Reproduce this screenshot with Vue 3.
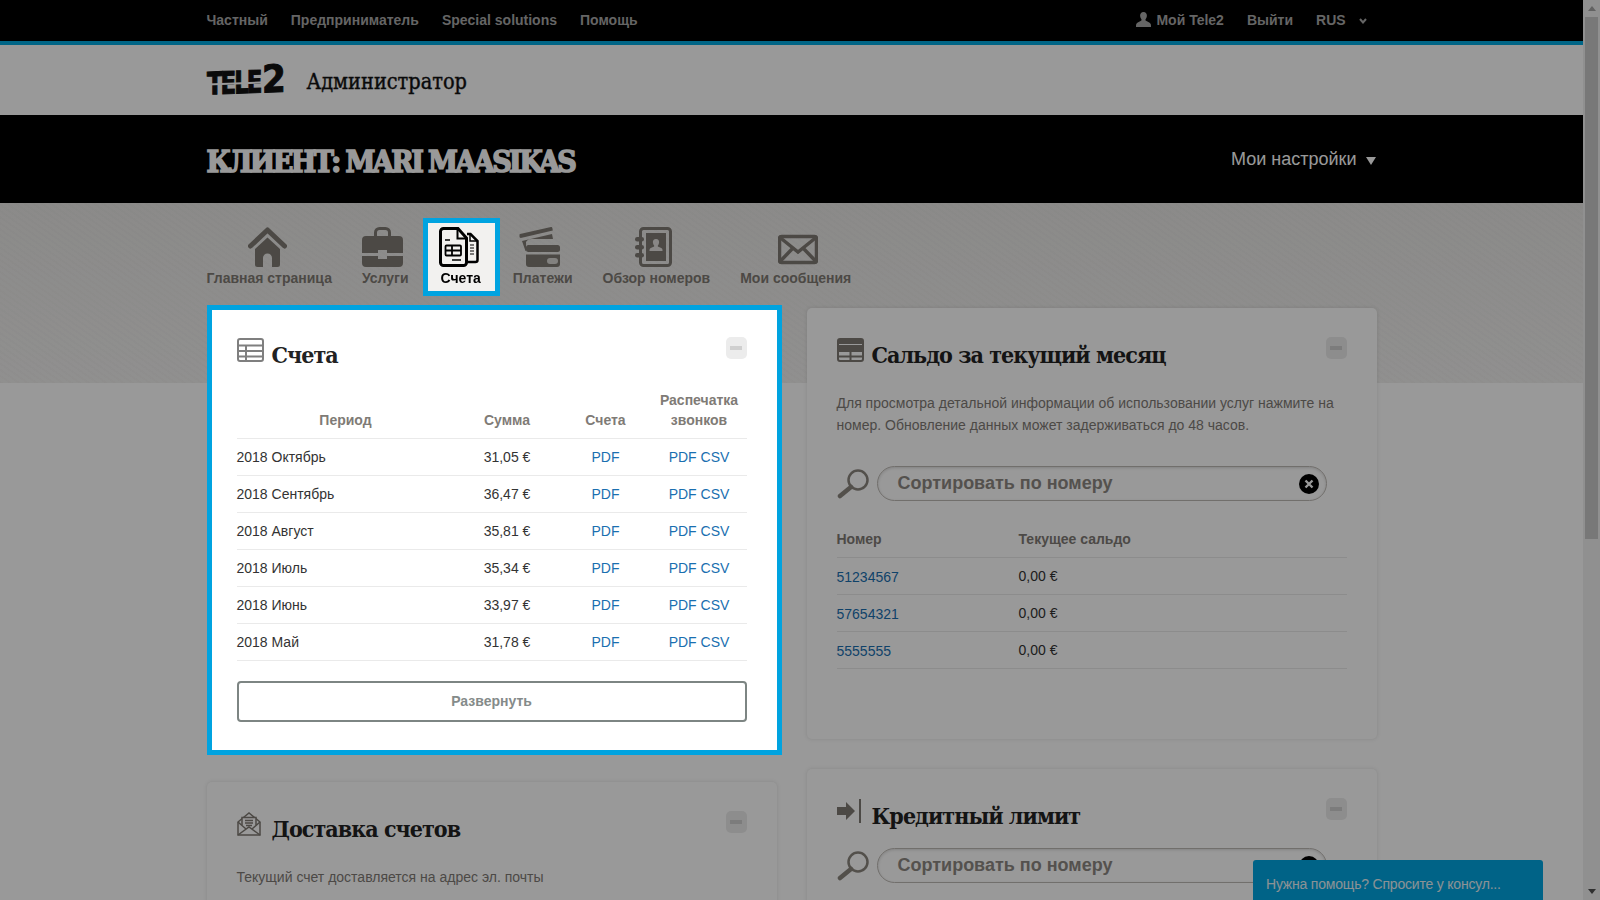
<script setup>
const nav = [
  { key: 'home', label: 'Главная страница' },
  { key: 'case', label: 'Услуги' },
  { key: 'bills', label: 'Счета', active: true },
  { key: 'cards', label: 'Платежи' },
  { key: 'book', label: 'Обзор номеров' },
  { key: 'mail', label: 'Мои сообщения' },
]

const bills = [
  { period: '2018 Октябрь', sum: '31,05 €' },
  { period: '2018 Сентябрь', sum: '36,47 €' },
  { period: '2018 Август', sum: '35,81 €' },
  { period: '2018 Июль', sum: '35,34 €' },
  { period: '2018 Июнь', sum: '33,97 €' },
  { period: '2018 Май', sum: '31,78 €' },
]

const numbers = ['51234567', '57654321', '5555555']
</script>

<template>
  <div class="app">
    <div class="page">
      <div class="topbar">
        <div class="wrap topbar-in">
          <div class="top-links">
            <a>Частный</a>
            <a>Предприниматель</a>
            <a>Special solutions</a>
            <a>Помощь</a>
          </div>
          <div class="top-links right">
            <a class="me">
              <svg width="15" height="15" viewBox="0 0 15 15"><path d="M7.5 0c2.3 0 3.6 1.700 3.400 4-.1 1.400-.6 2.500-1.300 3.300-.3.5-.2 1.200.4 1.500 1.800.8 4 1.700 4.800 3.500.2.700.2 1.700.2 2.700H0c0-1 0-2 .2-2.700.8-1.800 3-2.700 4.800-3.500.6-.3.7-1 .4-1.500C4.700 6.500 4.200 5.400 4.100 4 3.900 1.700 5.200 0 7.500 0z" fill="#a8a8a8"/></svg>
              Мой Tele2
            </a>
            <a>Выйти</a>
            <a class="lang">RUS
              <svg width="8" height="6" viewBox="0 0 8 6"><path d="M1 1l3 3.500L7 1" fill="none" stroke="#a8a8a8" stroke-width="2"/></svg>
            </a>
          </div>
        </div>
      </div>

      <div class="head">
        <div class="wrap head-in">
          <div class="logo"><span class="logo-tele">TELE</span><span class="logo-two">2</span></div>
          <div class="role">Администратор</div>
        </div>
      </div>

      <div class="banner">
        <div class="wrap banner-in">
          <h1>КЛИЕНТ: MARI MAASIKAS</h1>
          <div class="settings">Мои настройки <i class="tri"></i></div>
        </div>
      </div>

      <div class="content">
        <div class="wrap">
          <div class="nav">
            <div v-for="item in nav" :key="item.key" class="nav-item" :class="{ active: item.active }">
              <div class="nav-icon" :class="'i-' + item.key">
                <svg v-if="item.key === 'home'" width="39" height="40" viewBox="0 0 39 40" fill="#7f7a73">
                  <path d="M2.500 19L19.500 3l17 16" fill="none" stroke="#7f7a73" stroke-width="5" stroke-linecap="round" stroke-linejoin="round"/>
                  <path d="M19.500 10.500L32 22v15.500a2.500 2.500 0 0 1-2.500 2.500H24V31a4.500 4.500 0 0 0-9 0v9H9.500A2.500 2.500 0 0 1 7 37.500V22z"/>
                </svg>
                <svg v-else-if="item.key === 'case'" width="41" height="40" viewBox="0 0 41 40" fill="#7f7a73">
                  <rect x="13.500" y="1.500" width="14" height="11" rx="4" fill="none" stroke="#7f7a73" stroke-width="3"/>
                  <path d="M4 9h33a4 4 0 0 1 4 4v13H25v-3h-9v3H0V13a4 4 0 0 1 4-4z"/>
                  <path d="M0 29h16v3h9v-3h16v7a4 4 0 0 1-4 4H4a4 4 0 0 1-4-4z"/>
                </svg>
                <svg v-else-if="item.key === 'bills'" width="40" height="40" viewBox="0 0 40 40">
                  <path d="M28 7h3.500L38.500 14v19a2 2 0 0 1-2 2H27" fill="none" stroke="#000" stroke-width="2.500"/>
                  <path d="M31 7v7h7" fill="none" stroke="#000" stroke-width="1.500"/>
                  <path d="M31 18h4M31 21h4M31 24h4M31 27h4" stroke="#000" stroke-width="1.200"/>
                  <path d="M4.500 1.500H19L27.500 11v24.500a3 3 0 0 1-3 3h-20a3 3 0 0 1-3-3v-31a3 3 0 0 1 3-3z" fill="#f2f1ef" stroke="#000" stroke-width="3"/>
                  <path d="M18.500 2v9.500h9" fill="none" stroke="#000" stroke-width="2"/>
                  <path d="M6 13h5M13 33h9" stroke="#000" stroke-width="1.500"/>
                  <rect x="6.500" y="18.500" width="15.500" height="10" rx="1" fill="none" stroke="#000" stroke-width="1.800"/>
                  <path d="M6.500 23.500H22M13 18.500v10" stroke="#000" stroke-width="1.800"/>
                </svg>
                <svg v-else-if="item.key === 'cards'" width="42" height="40" viewBox="0 0 42 40" fill="#7f7a73">
                  <path d="M1 7L32 0c.8 0 1.300.5 1.400 1.200l.4 2.300L1.800 11C1 11 .5 10.500.5 9.800V8c0-.5.2-.9.500-1z"/>
                  <path d="M3 14l30-7 1 5H13c-3 0-5 1-6 3l.2 9h-.7z"/>
                  <rect x="7" y="18" width="34" height="7" rx="2.500"/>
                  <path d="M7 27.500h34V37a3 3 0 0 1-3 3H10a3 3 0 0 1-3-3z"/>
                  <rect x="28" y="31" width="11" height="6" rx="3" fill="#d9d7d4"/>
                </svg>
                <svg v-else-if="item.key === 'book'" width="37" height="40" viewBox="0 0 37 40" fill="#7f7a73">
                  <rect x="5.500" y="1.500" width="30" height="37" rx="3" fill="none" stroke="#7f7a73" stroke-width="3"/>
                  <rect x="11" y="6" width="20" height="28"/>
                  <rect x="0" y="10" width="9" height="4.500" rx="2.200"/>
                  <rect x="0" y="18" width="9" height="4.500" rx="2.200"/>
                  <rect x="0" y="26" width="9" height="4.500" rx="2.200"/>
                  <path d="M21 12c2.300 0 3.300 1.700 3.100 3.600-.1 1.200-.6 2.200-1.200 2.900-.3.500-.1 1 .4 1.200 1.700.7 3.400 1.100 4 2.300.2.500.2 1.500.2 2H14.500c0-.5 0-1.500.2-2 .6-1.200 2.300-1.600 4-2.300.5-.2.700-.7.400-1.200-.6-.7-1.100-1.700-1.200-2.900C17.700 13.700 18.700 12 21 12z" fill="#e4e2df"/>
                </svg>
                <svg v-else width="40" height="40" viewBox="0 0 40 40" fill="none" stroke="#7f7a73" stroke-width="3.500">
                  <rect x="1.500" y="9.500" width="37" height="26" rx="2"/>
                  <path d="M2 10.500L20 25l18-14.500M2 34.500L15 21M38 34.500L25 21"/>
                </svg>
              </div>
              <span>{{ item.label }}</span>
            </div>
          </div>

          <div class="columns">
            <div class="col">
              <section class="card spot">
                <div class="card-title">
                  <svg width="27" height="24" viewBox="0 0 27 24" fill="none" stroke="#7f7f7f" stroke-width="2">
                    <rect x="1" y="1" width="25" height="22" rx="2"/>
                    <path d="M1 7.500h25M1 13h25M1 18.500h25M9 7.500V23"/>
                  </svg>
                  <h2>Счета</h2>
                  <button class="minus"><i></i></button>
                </div>
                <table class="bills">
                  <thead>
                    <tr>
                      <th class="c-period">Период</th>
                      <th class="c-sum">Сумма</th>
                      <th class="c-bill">Счета</th>
                      <th class="c-calls">Распечатка<br>звонков</th>
                    </tr>
                  </thead>
                  <tbody>
                    <tr v-for="row in bills" :key="row.period">
                      <td class="left">{{ row.period }}</td>
                      <td>{{ row.sum }}</td>
                      <td><a>PDF</a></td>
                      <td><a>PDF</a> <a>CSV</a></td>
                    </tr>
                  </tbody>
                </table>
                <button class="expand">Развернуть</button>
              </section>

              <section class="card">
                <div class="card-title">
                  <svg width="24" height="24" viewBox="0 0 24 24" fill="none" stroke="#7f7a73" stroke-width="1.500">
                    <path d="M1 10L12 1l11 9v13H1z"/>
                    <path d="M1 10l8 7M23 10l-8 7M1 23l11-8 11 8"/>
                    <path d="M5 13V5.500h14V13" fill="#fff"/>
                    <path d="M8 8.500h8M8 11h8M9 13.500h6"/>
                  </svg>
                  <h2>Доставка счетов</h2>
                  <button class="minus"><i></i></button>
                </div>
                <p class="text">Текущий счет доставляется на адрес эл. почты</p>
              </section>
            </div>

            <div class="col">
              <section class="card balance">
                <div class="card-title">
                  <svg width="27" height="24" viewBox="0 0 27 24">
                    <rect x="1" y="1" width="25" height="22" rx="2" fill="none" stroke="#7f7a73" stroke-width="2"/>
                    <rect x="1" y="7" width="25" height="7" fill="#7f7a73"/>
                    <path d="M1 3.500h25" stroke="#7f7a73" stroke-width="5"/>
                    <path d="M1 18.500h25M13.500 14v9" stroke="#7f7a73" stroke-width="2"/>
                  </svg>
                  <h2>Сальдо за текущий месяц</h2>
                  <button class="minus"><i></i></button>
                </div>
                <p class="text">Для просмотра детальной информации об использовании услуг нажмите на номер. Обновление данных может задерживаться до 48 часов.</p>
                <div class="search">
                  <svg width="32" height="30" viewBox="0 0 32 30" fill="none" stroke="#8a857e">
                    <circle cx="21" cy="11" r="9.500" stroke-width="2.500"/>
                    <path d="M14 18L3 27" stroke-width="4.500" stroke-linecap="round"/>
                  </svg>
                  <div class="field">
                    <span>Сортировать по номеру</span>
                    <i class="clear">
                      <svg width="10" height="10" viewBox="0 0 10 10"><path d="M1.500 1.500l7 7M8.500 1.500l-7 7" stroke="#fff" stroke-width="2.400"/></svg>
                    </i>
                  </div>
                </div>
                <table class="nums">
                  <thead>
                    <tr>
                      <th class="c-num">Номер</th>
                      <th>Текущее сальдо</th>
                    </tr>
                  </thead>
                  <tbody>
                    <tr v-for="num in numbers" :key="num">
                      <td class="num"><a>{{ num }}</a></td>
                      <td>0,00 €</td>
                    </tr>
                  </tbody>
                </table>
              </section>

              <section class="card">
                <div class="card-title credit">
                  <svg width="25" height="24" viewBox="0 0 25 24" fill="#7f7a73">
                    <path d="M0 8h9V3l9 9-9 9v-5H0z"/>
                    <rect x="22" y="0" width="2" height="24"/>
                  </svg>
                  <h2>Кредитный лимит</h2>
                  <button class="minus"><i></i></button>
                </div>
                <div class="search">
                  <svg width="32" height="30" viewBox="0 0 32 30" fill="none" stroke="#8a857e">
                    <circle cx="21" cy="11" r="9.500" stroke-width="2.500"/>
                    <path d="M14 18L3 27" stroke-width="4.500" stroke-linecap="round"/>
                  </svg>
                  <div class="field">
                    <span>Сортировать по номеру</span>
                    <i class="clear"></i>
                  </div>
                </div>
              </section>
            </div>
          </div>
        </div>
      </div>

      <div class="chat">Нужна помощь? Спросите у консул...</div>
    </div>

    <div class="scrollbar">
      <i class="arrow up"></i>
      <div class="thumb-track"><div class="thumb"></div></div>
      <i class="arrow down"></i>
    </div>

    <div class="overlay"></div>
  </div>
</template>

<style>
html, body {
  overflow: hidden;
}
</style>

<style scoped>
.app {
  display: flex;
  width: 1600px;
  height: 900px;
  font-family: "Liberation Sans", Arial, sans-serif;
  font-size: 14px;
  color: #333;
}

.page {
  position: relative;
  width: 1583px;
  height: 900px;
  overflow: hidden;
  background: #fff;
}

.wrap {
  width: 1170px;
  margin: 0 auto;
}

.overlay {
  position: fixed;
  inset: 0;
  z-index: 10;
  background: rgba(0, 0, 0, 0.4);
}

/* top */
.topbar {
  height: 41px;
  background: #000;
  border-bottom: 4px solid #00a9e0;
}

.topbar-in {
  display: flex;
  justify-content: space-between;
  align-items: center;
  height: 39px;
}

.top-links {
  display: flex;
  gap: 23px;
  font-weight: bold;
  color: #a8a8a8;
}

.top-links.right {
  padding-right: 10px;
}

.me {
  display: flex;
  align-items: center;
  gap: 5px;
}

.lang svg {
  margin-left: 9px;
  vertical-align: 1px;
}

.head {
  height: 70px;
  background: #fff;
}

.head-in {
  display: flex;
  align-items: center;
  height: 70px;
}

.logo {
  position: relative;
  display: flex;
  align-items: flex-end;
  width: 80px;
  height: 30px;
  margin-right: 20px;
  font-family: "DejaVu Sans Condensed", "DejaVu Sans", sans-serif;
  font-weight: bold;
  line-height: 1;
  color: #111;
  transform: skewY(-2deg);
}

/* stencil cuts across the letters */
.logo::after {
  content: "";
  position: absolute;
  left: 0;
  right: 22px;
  top: 17px;
  height: 1.500px;
  background: #fff;
}

.logo-tele {
  display: inline-block;
  font-size: 31px;
  letter-spacing: -2.500px;
  margin-right: -12px;
  margin-bottom: -3px;
  -webkit-text-stroke: 1px #111;
  transform: scaleX(0.82);
  transform-origin: left bottom;
}

.logo-two {
  font-size: 38px;
  margin-left: 2px;
  margin-bottom: -4px;
  -webkit-text-stroke: 1px #111;
}

.role {
  padding-top: 2px;
  font-family: "DejaVu Serif Condensed", "DejaVu Serif", serif;
  font-size: 21.500px;
  color: #111;
  -webkit-text-stroke: 0.4px #111;
}

.banner {
  height: 88px;
  background: #000;
}

.banner-in {
  display: flex;
  justify-content: space-between;
  align-items: center;
  height: 88px;
}

h1 {
  margin: 0;
  padding-top: 4px;
  font-family: "DejaVu Serif Condensed", "DejaVu Serif", serif;
  font-weight: bold;
  font-size: 30px;
  letter-spacing: -2.550px;
  color: #fff;
  -webkit-text-stroke: 1.500px #fff;
}

.settings {
  display: flex;
  align-items: center;
  font-size: 18px;
  color: #fff;
}

.tri {
  width: 0;
  height: 0;
  margin: 3px 1px 0 9px;
  border-left: 5px solid transparent;
  border-right: 5px solid transparent;
  border-top: 8px solid #fff;
}

/* page body with textured band */
.content {
  height: 697px;
  background:
    repeating-linear-gradient(35deg, rgba(0, 0, 0, 0.012) 0 2px, transparent 2px 5px) top / 100% 180px no-repeat,
    linear-gradient(#e8e7e5, #f1f0ef) top / 100% 180px no-repeat,
    #fff;
}

.nav {
  display: flex;
  gap: 30px;
  padding-top: 20px;
  margin-bottom: 17px;
}

.nav-item {
  position: relative;
  display: flex;
  flex-direction: column;
  align-items: center;
  height: 68px;
  padding-top: 4px;
  box-sizing: border-box;
  font-weight: bold;
  line-height: 18px;
  color: #7f7a73;
  white-space: nowrap;
}

.nav-item.active {
  z-index: 11;
  margin: 0 -12px 0 -10px;
  padding: 4px 14px 0 12px;
  background: #f2f1ef;
  box-shadow: 0 0 0 5px #00a3e0;
  color: #000;
}

.nav-icon {
  height: 40px;
  margin-bottom: 2px;
}

.nav-icon svg {
  display: block;
}

/* icons don't sit dead centre over their labels */
.i-home { margin-left: -4px; }
.i-case,
.i-cards,
.i-book { margin-left: -6px; }
.i-bills { margin-left: -4px; }
.i-mail { margin-left: 4px; }

/* cards */
.columns {
  display: grid;
  grid-template-columns: 570px 570px;
  gap: 30px;
  align-items: start;
}

.col {
  display: flex;
  flex-direction: column;
  gap: 30px;
}

.card {
  position: relative;
  box-sizing: border-box;
  padding: 30px;
  background: #fff;
  border-radius: 5px;
  box-shadow: 0 0 4px rgba(0, 0, 0, 0.12);
}

.card.spot {
  z-index: 11;
  border-radius: 0;
  box-shadow: none;
}

/* blue frame of the guided tour, sits a little off the card */
.card.spot::after {
  content: "";
  position: absolute;
  top: -3px;
  left: 0;
  right: -5px;
  bottom: -3px;
  border: 5px solid #00a3e0;
  pointer-events: none;
}

.balance {
  min-height: 431px;
}

.card-title {
  display: grid;
  grid-template-columns: 35px 1fr auto;
  align-items: start;
  height: 26px;
  margin-bottom: 26px;
}

.card-title.credit {
  margin-bottom: 23px;
}

h2 {
  margin: 0;
  padding-top: 3px;
  font-family: "DejaVu Serif Condensed", "DejaVu Serif", serif;
  font-weight: bold;
  font-size: 23px;
  line-height: 28px;
  letter-spacing: -0.950px;
  color: #222;
  white-space: nowrap;
}

.minus {
  display: flex;
  align-items: center;
  justify-content: center;
  width: 21px;
  height: 22px;
  margin-top: -1px;
  padding: 0;
  background: #ececec;
  border: 0;
  border-radius: 5px;
}

.minus i {
  width: 12px;
  height: 4px;
  background: #cfcfcf;
}

.text {
  margin: 28px 0 0;
  line-height: 22px;
  color: #7f7b76;
}

table {
  width: 100%;
  border-collapse: separate;
  border-spacing: 0;
  table-layout: fixed;
}

th {
  padding: 0 0 8px;
  font-weight: bold;
  line-height: 20px;
  color: #7f7b76;
  vertical-align: bottom;
  border-bottom: 1px solid #eaeaea;
}

td {
  box-sizing: border-box;
  height: 37px;
  padding: 0;
  border-bottom: 1px solid #eaeaea;
}

a {
  color: #1a6fb0;
}

.top-links a {
  color: inherit;
}

.bills th,
.bills td {
  text-align: center;
}

.bills td.left {
  text-align: left;
}

.c-period { width: 218px; }
.c-sum { width: 105px; }
.c-bill { width: 92px; }

.bills th {
  height: 49px;
  box-sizing: border-box;
}

.expand {
  display: block;
  width: 100%;
  height: 41px;
  margin-top: 20px;
  padding: 0 0 2px;
  background: #fff;
  border: 2px solid #7d8583;
  border-radius: 4px;
  font-family: inherit;
  font-size: 14px;
  font-weight: bold;
  color: #858b8a;
}

.search {
  display: flex;
  align-items: center;
  gap: 8px;
  margin-top: 30px;
}

.card-title + .search {
  margin-top: 0;
}

.field {
  display: flex;
  align-items: center;
  justify-content: space-between;
  box-sizing: border-box;
  width: 450px;
  height: 35px;
  padding: 0 7px 0 20px;
  border: 1px solid #bdb9b4;
  border-radius: 18px;
  box-shadow: inset 0 1px 3px rgba(0, 0, 0, 0.15);
  font-size: 18px;
  font-weight: bold;
  color: #8d8882;
}

.clear {
  display: flex;
  align-items: center;
  justify-content: center;
  width: 20px;
  height: 20px;
  border-radius: 50%;
  background: #000;
}

.nums {
  margin-top: 21px;
}

.nums th {
  box-sizing: border-box;
  height: 36px;
  text-align: left;
}

.nums .num {
  padding-top: 2px;
}

.c-num { width: 182px; }

.chat {
  position: absolute;
  left: 1253px;
  bottom: 0;
  box-sizing: border-box;
  width: 290px;
  height: 40px;
  padding: 15px 13px 0;
  background: #00a5e1;
  border-radius: 3px 3px 0 0;
  line-height: 18px;
  color: #e8f4f8;
  letter-spacing: -0.200px;
}

/* scrollbar drawn by hand so it dims with the page */
.scrollbar {
  position: relative;
  display: flex;
  flex-direction: column;
  align-items: center;
  width: 17px;
  height: 900px;
  background: #f0f0f0;
}

.thumb-track {
  flex: 1;
  width: 100%;
}

.thumb {
  width: 13px;
  height: 522px;
  margin: 0 auto;
  background: #c8c8c8;
}

.arrow {
  flex: none;
  width: 0;
  height: 0;
  margin: 6px 0;
  border-left: 4px solid transparent;
  border-right: 4px solid transparent;
}

.arrow.up {
  border-bottom: 5px solid #a3a3a3;
}

.arrow.down {
  border-top: 5px solid #505050;
}
</style>
